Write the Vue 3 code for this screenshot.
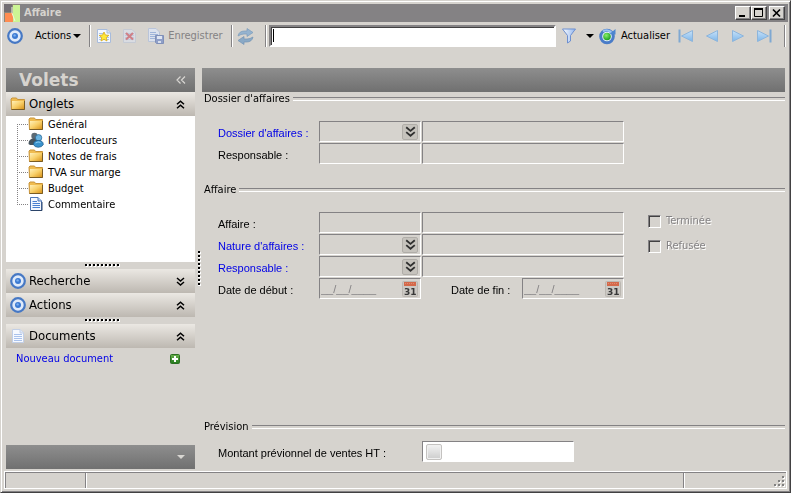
<script setup>
import { ref } from 'vue'

const query = ref('')
const amount = ref('')
const startDate = ref('__/__/____')
const endDate = ref('__/__/____')

const tabs = [
  { label: 'Général', icon: 'folder' },
  { label: 'Interlocuteurs', icon: 'people' },
  { label: 'Notes de frais', icon: 'folder' },
  { label: 'TVA sur marge', icon: 'folder' },
  { label: 'Budget', icon: 'folder' },
  { label: 'Commentaire', icon: 'note' }
]

const caseRows = [
  { id: 'aff', label: 'Affaire :', link: false },
  { id: 'nature', label: "Nature d'affaires :", link: true },
  { id: 'resp', label: 'Responsable :', link: true }
]
</script>

<template>
  <div class="window">
    <svg class="defs" width="0" height="0" aria-hidden="true">
      <defs>
        <linearGradient id="gFolder" x1="0" y1="0" x2="1" y2="1">
          <stop offset="0" stop-color="#fff0b8" />
          <stop offset="0.5" stop-color="#f8cf68" />
          <stop offset="1" stop-color="#d9941c" />
        </linearGradient>
        <linearGradient id="gBlue" x1="0" y1="0" x2="0" y2="1">
          <stop offset="0" stop-color="#c9e2f8" />
          <stop offset="1" stop-color="#7db6ea" />
        </linearGradient>
        <linearGradient id="gFunnel" x1="0" y1="0" x2="1" y2="0">
          <stop offset="0" stop-color="#ffffff" />
          <stop offset="1" stop-color="#8fb4ee" />
        </linearGradient>
        <linearGradient id="gGreen" x1="0" y1="0" x2="0" y2="1">
          <stop offset="0" stop-color="#6ab04c" />
          <stop offset="1" stop-color="#237a1c" />
        </linearGradient>
        <radialGradient id="gBall" cx="0.4" cy="0.35" r="0.7">
          <stop offset="0" stop-color="#8cf06a" />
          <stop offset="1" stop-color="#149a1c" />
        </radialGradient>
      </defs>
      <symbol id="target" viewBox="0 0 16 16">
        <circle cx="8" cy="8" r="6.800" fill="#dfeafa" stroke="#4678c4" stroke-width="2.200" />
        <circle cx="8" cy="8" r="3" fill="#3b79d2" />
        <circle cx="7.600" cy="7.400" r="1.200" fill="#7cb0f0" />
      </symbol>
      <symbol id="folder" viewBox="0 0 16 16">
        <path d="M1 3 L2 2 H6.500 L7.500 3.500 H14.500 V13.500 H1.500 Z" fill="#f0bc50" stroke="#c8943a" />
        <path d="M2 5 H14 V13 H2 Z" fill="url(#gFolder)" />
        <path d="M1.500 13.500 H14.500 V5" fill="none" stroke="#7a5c24" />
      </symbol>
      <symbol id="people" viewBox="0 0 16 16">
        <circle cx="6.500" cy="4" r="3.200" fill="#5c6a74" />
        <path d="M0.500 12 Q0.500 6.500 6 6.500 Q10 6.500 10 13 H2 Z" fill="#46545e" />
        <circle cx="10.600" cy="5.800" r="3.200" fill="#6ab4e2" stroke="#23618f" stroke-width="0.700" />
        <path d="M5.500 12.500 Q5.500 8.500 10.200 8.500 Q15.300 8.500 15.300 12.500 Q14 15.300 10.200 15.300 Q6.500 15.300 5.500 12.500 Z" fill="#3a92cc" stroke="#1f5c88" stroke-width="0.700" />
        <path d="M7.500 11 Q10 9.200 12.500 10.400" fill="none" stroke="#8fd0f4" />
      </symbol>
      <symbol id="note" viewBox="0 0 16 16">
        <path d="M2.500 1.500 H10 L13.500 5 V14.500 H2.500 Z" fill="#f4f8ff" stroke="#4f76b4" />
        <path d="M10 1.500 V5 H13.500" fill="#bcd0f0" stroke="#4f76b4" />
        <path d="M4.500 5.500 H9 M4.500 7.500 H12 M4.500 9.500 H12 M4.500 11.500 H12" stroke="#4a80d0" />
        <path d="M3 14.500 H14 V6" fill="none" stroke="#2c4468" />
      </symbol>
      <symbol id="sheet" viewBox="0 0 16 16">
        <path d="M2.500 1.500 H10 L13.500 5 V14.500 H2.500 Z" fill="#f6f9ff" stroke="#c2cfe6" />
        <path d="M10 1.500 V5 H13.500" fill="#dde7f8" stroke="#c2cfe6" />
        <path d="M4 6.500 H12 M4 8.500 H12 M4 10.500 H12 M4 12.500 H12" stroke="#a9c2ec" />
      </symbol>
      <symbol id="down2" viewBox="0 0 9 9">
        <path d="M1 1 L4.500 4 L8 1 M1 5 L4.500 8 L8 5" fill="none" stroke="currentColor" stroke-width="1.500" />
      </symbol>
      <symbol id="up2" viewBox="0 0 9 9">
        <path d="M1 4.300 L4.500 1.200 L8 4.300 M1 8.300 L4.500 5.200 L8 8.300" fill="none" stroke="currentColor" stroke-width="1.500" />
      </symbol>
      <symbol id="calendar" viewBox="0 0 16 16">
        <rect x="0.500" y="0.500" width="15" height="15" rx="1" fill="#cbc8c3" stroke="#bbb7b1" />
        <rect x="2" y="1" width="12" height="4" fill="#d4694a" />
        <path d="M3 2.500 H13" stroke="#e08a70" stroke-dasharray="1 1" />
      </symbol>
    </svg>

    <header class="titlebar">
      <svg class="logo" width="16" height="18" viewBox="0 0 16 18">
        <rect width="16" height="18" fill="#8c8678" />
        <rect x="0" y="0" width="8" height="8" fill="#726e72" />
        <rect x="1" y="9" width="8" height="9" fill="#ff8c50" />
        <rect x="9" y="1" width="7" height="17" fill="#ccf594" />
        <path d="M8 3 V9 L11 17" fill="none" stroke="#eef8dc" />
      </svg>
      <h1>Affaire</h1>
      <div class="caption-buttons">
        <button type="button" aria-label="Réduire">
          <svg width="12" height="10" viewBox="0 0 12 10"><path d="M2 8 H8" stroke="#000" stroke-width="2" /></svg>
        </button>
        <button type="button" aria-label="Agrandir">
          <svg width="12" height="10" viewBox="0 0 12 10"><path d="M1.500 1 V8.500 H9.500 V1" fill="none" stroke="#000" /><path d="M1 1 H10" stroke="#000" stroke-width="2" /></svg>
        </button>
        <button type="button" class="close" aria-label="Fermer">
          <svg width="12" height="10" viewBox="0 0 12 10"><path d="M2 1.500 L9 8.500 M9 1.500 L2 8.500" stroke="#000" stroke-width="1.700" /></svg>
        </button>
      </div>
    </header>

    <nav class="toolbar">
      <button type="button" class="tool" aria-label="Cible">
        <svg width="16" height="16"><use href="#target" /></svg>
      </button>
      <button type="button" class="tool menu">Actions <i class="caret"></i></button>
      <span class="sep"></span>
      <button type="button" class="tool file" aria-label="Nouveau">
        <svg width="16" height="16" viewBox="0 0 16 16">
          <path d="M1.500 1.500 H11 L14.500 5 V14.500 H1.500 Z" fill="#f3f7ff" stroke="#a8bcdc" />
          <path d="M11 1.500 V5 H14.500" fill="#d7e3f6" stroke="#a8bcdc" />
          <path d="M3 5.500 H8 M3 7.500 H13 M3 9.500 H13 M3 11.500 H13" stroke="#a8c2ec" />
          <path d="M8 4 L9.400 7 L12.800 7.400 L10.300 9.600 L11 13 L8 11.300 L5 13 L5.700 9.600 L3.200 7.400 L6.600 7 Z" fill="#ffe83a" stroke="#d9ac1c" stroke-width="0.800" />
        </svg>
      </button>
      <button type="button" class="tool file" disabled aria-label="Supprimer">
        <svg width="16" height="16" viewBox="0 0 16 16">
          <path d="M1.500 1.500 H10 L13.500 5 V14.500 H1.500 Z" fill="#d9dce2" stroke="#c5cad4" />
          <path d="M3 5.500 H12 M3 7.500 H12 M3 9.500 H12 M3 11.500 H12" stroke="#c0cbe0" />
          <path d="M4 5 L11 11.500 M11 5 L4 11.500" stroke="#cf8087" stroke-width="2.200" />
        </svg>
      </button>
      <button type="button" class="tool save" disabled>
        <svg width="16" height="16" viewBox="0 0 16 16">
          <path d="M0.500 0.500 H8 L11.500 4 V13.500 H0.500 Z" fill="#dce2ee" stroke="#b9c4d9" />
          <path d="M2 4.500 H8 M2 6.500 H10 M2 8.500 H10 M2 10.500 H7" stroke="#9fb4da" />
          <path d="M7.500 7.500 H15.500 V15.500 H8.500 L7.500 14.500 Z" fill="#8f9fc8" stroke="#8090b8" />
          <path d="M9 8 H14 V11 H9 Z" fill="#dfe5f2" />
          <path d="M10 13 H13 V15 H10 Z" fill="#d8dfee" />
        </svg>
        Enregistrer
      </button>
      <span class="sep"></span>
      <button type="button" class="tool sync" disabled aria-label="Synchroniser">
        <svg width="17" height="17" viewBox="0 0 17 17">
          <path d="M1 8 Q2 3 7.500 3 H10 V0.500 L16 4.500 L10 8.500 V6 H7 Q4 6 1 8 Z" fill="#95b3cf" stroke="#7b9cbc" stroke-width="0.700" />
          <path d="M16 9 Q15 14 9.500 14 H7 V16.500 L1 12.500 L7 8.500 V11 H10 Q13 11 16 9 Z" fill="#8aa9c6" stroke="#7394b5" stroke-width="0.700" />
        </svg>
      </button>
      <span class="sep"></span>
      <input v-model="query" class="search" type="text" aria-label="Rechercher" autofocus />
      <button type="button" class="tool filter" aria-label="Filtrer">
        <svg width="16" height="16" viewBox="0 0 16 16">
          <path d="M1.500 1 H14.500 L9.500 7.500 V13 L6.500 15 V7.500 Z" fill="url(#gFunnel)" stroke="#6d8fd0" />
        </svg>
      </button>
      <button type="button" class="tool drop" aria-label="Filtres"><i class="caret"></i></button>
      <button type="button" class="tool reload">
        <svg width="17" height="17" viewBox="0 0 17 17">
          <circle cx="8" cy="8.500" r="6.300" fill="#e8f1fc" stroke="#4a7cc8" stroke-width="3" />
          <path d="M4 3.500 A6.500 6.500 0 0 1 13 5" fill="none" stroke="#9cc4f2" stroke-width="2" />
          <path d="M10.500 6 L16.500 1 V6.500 Z" fill="#4d86d0" />
          <circle cx="8" cy="8.500" r="3.800" fill="url(#gBall)" />
        </svg>
        Actualiser
      </button>
      <button type="button" class="tool step" disabled aria-label="Premier">
        <svg width="16" height="14" viewBox="0 0 16 14"><path d="M1.500 0.500 V13.500" stroke="#7fa8d2" stroke-width="2" /><path d="M14.500 1.500 V12.500 L3.500 7 Z" fill="url(#gBlue)" stroke="#8db5dc" /></svg>
      </button>
      <button type="button" class="tool step" disabled aria-label="Précédent">
        <svg width="16" height="14" viewBox="0 0 16 14"><path d="M13.500 1.500 V12.500 L2.500 7 Z" fill="url(#gBlue)" stroke="#8db5dc" /></svg>
      </button>
      <button type="button" class="tool step" disabled aria-label="Suivant">
        <svg width="16" height="14" viewBox="0 0 16 14"><path d="M2.500 1.500 V12.500 L13.500 7 Z" fill="url(#gBlue)" stroke="#8db5dc" /></svg>
      </button>
      <button type="button" class="tool step" disabled aria-label="Dernier">
        <svg width="16" height="14" viewBox="0 0 16 14"><path d="M14.500 0.500 V13.500" stroke="#7fa8d2" stroke-width="2" /><path d="M1.500 1.500 V12.500 L12.500 7 Z" fill="url(#gBlue)" stroke="#8db5dc" /></svg>
      </button>
      <span class="sep last"></span>
    </nav>

    <div class="body">
      <aside class="sidebar">
        <div class="band head">
          <h2>Volets</h2>
          <button type="button" class="plain" aria-label="Replier">
            <svg width="10" height="8" viewBox="0 0 10 8"><path d="M4.500 0.500 L1 4 L4.500 7.500 M9 0.500 L5.500 4 L9 7.500" fill="none" stroke="#d8d6d2" stroke-width="1.200" /></svg>
          </button>
        </div>
        <button type="button" class="panel-title">
          <svg width="16" height="16"><use href="#folder" /></svg>
          <span>Onglets</span>
          <svg width="9" height="9"><use href="#up2" /></svg>
        </button>
        <ul class="tree">
          <li v-for="tab in tabs" :key="tab.label">
            <span class="branch"></span>
            <svg width="16" height="16"><use :href="'#' + tab.icon" /></svg>
            <span>{{ tab.label }}</span>
          </li>
        </ul>
        <div class="grip"><i></i></div>
        <button type="button" class="panel-title">
          <svg width="16" height="16"><use href="#target" /></svg>
          <span>Recherche</span>
          <svg width="9" height="9"><use href="#down2" /></svg>
        </button>
        <button type="button" class="panel-title">
          <svg width="16" height="16"><use href="#target" /></svg>
          <span>Actions</span>
          <svg width="9" height="9"><use href="#up2" /></svg>
        </button>
        <div class="grip"><i></i></div>
        <button type="button" class="panel-title">
          <svg width="16" height="16"><use href="#sheet" /></svg>
          <span>Documents</span>
          <svg width="9" height="9"><use href="#up2" /></svg>
        </button>
        <div class="doc-row">
          <a href="#">Nouveau document</a>
          <button type="button" class="plain" aria-label="Ajouter">
            <svg width="10" height="10" viewBox="0 0 10 10"><rect x="0.500" y="0.500" width="9" height="9" rx="1" fill="url(#gGreen)" stroke="#2c6e22" /><path d="M5 2 V8 M2 5 H8" stroke="#fff" stroke-width="2" /></svg>
          </button>
        </div>
        <div class="band foot">
          <button type="button" class="plain" aria-label="Plus de volets">
            <svg width="8" height="4" viewBox="0 0 8 4"><path d="M0 0 H8 L4 4 Z" fill="#d8d6d2" /></svg>
          </button>
        </div>
      </aside>

      <div class="splitter"><i></i></div>

      <main class="content">
        <div class="band"></div>

        <section class="group">
          <h3>Dossier d'affaires</h3>
          <div class="form">
            <label class="link" for="dossier">Dossier d'affaires :</label>
            <div class="field">
              <input id="dossier" type="text" disabled />
              <button type="button" class="pick" aria-label="Choisir un dossier"><svg width="11" height="11"><use href="#down2" /></svg></button>
            </div>
            <input class="field" type="text" disabled aria-label="Libellé du dossier" />
            <label for="dossier-resp">Responsable :</label>
            <input id="dossier-resp" class="field" type="text" disabled />
            <input class="field" type="text" disabled aria-label="Nom du responsable" />
          </div>
        </section>

        <section class="group second">
          <h3>Affaire</h3>
          <div class="columns">
            <div class="form">
              <template v-for="row in caseRows" :key="row.id">
                <label :for="row.id" :class="{ link: row.link }">{{ row.label }}</label>
                <div class="field">
                  <input :id="row.id" type="text" disabled />
                  <button v-if="row.link" type="button" class="pick" aria-label="Choisir"><svg width="11" height="11"><use href="#down2" /></svg></button>
                </div>
                <input class="field" type="text" disabled aria-label="Libellé" />
              </template>
              <label for="start">Date de début :</label>
              <div class="field">
                <input id="start" v-model="startDate" type="text" disabled />
                <button type="button" class="date" aria-label="Calendrier de début"><svg width="16" height="16"><use href="#calendar" /><text x="2" y="14">31</text></svg></button>
              </div>
              <div class="end-date">
                <label for="end">Date de fin :</label>
                <div class="field">
                  <input id="end" v-model="endDate" type="text" disabled />
                  <button type="button" class="date" aria-label="Calendrier de fin"><svg width="16" height="16"><use href="#calendar" /><text x="2" y="14">31</text></svg></button>
                </div>
              </div>
            </div>
            <div class="checks">
              <label><input type="checkbox" disabled /> Terminée</label>
              <label><input type="checkbox" disabled /> Refusée</label>
            </div>
          </div>
        </section>

        <section class="group forecast">
          <h3>Prévision</h3>
          <div class="form">
            <label class="wide" for="amount">Montant prévionnel de ventes HT :</label>
            <div class="field amount">
              <button type="button" class="calc" aria-label="Calculer"></button>
              <input id="amount" v-model="amount" type="text" />
            </div>
          </div>
        </section>
      </main>
    </div>

    <footer class="status">
      <span></span>
      <span></span>
      <span class="corner">
        <svg width="12" height="12" viewBox="0 0 12 12">
          <path d="M9 1 h2 v2 h-2 z M5 5 h2 v2 h-2 z M9 5 h2 v2 h-2 z M1 9 h2 v2 h-2 z M5 9 h2 v2 h-2 z M9 9 h2 v2 h-2 z" fill="#fff" />
          <path d="M8 0 h2 v2 h-2 z M4 4 h2 v2 h-2 z M8 4 h2 v2 h-2 z M0 8 h2 v2 h-2 z M4 8 h2 v2 h-2 z M8 8 h2 v2 h-2 z" fill="#808080" />
        </svg>
      </span>
    </footer>
  </div>
</template>

<style>
body {
  margin: 0;
  background: #d6d3ce;
}
</style>

<style scoped>
* {
  box-sizing: border-box;
}

.window {
  display: flex;
  flex-direction: column;
  min-height: 100vh;
  padding: 2px;
  background: #d6d3ce;
  border: 1px solid #d6d3ce;
  border-right-color: #424142;
  border-bottom-color: #424142;
  box-shadow: inset 1px 1px #fff, inset -1px -1px #848284;
  color: #000;
  font: 11px/14px "DejaVu Sans Condensed", "Liberation Sans", sans-serif;
}

.defs {
  position: absolute;
}

svg {
  display: block;
  flex: none;
}

button {
  font: inherit;
  color: inherit;
  padding: 0;
  margin: 0;
  border: 0;
  background: none;
}

input {
  font: inherit;
  margin: 0;
  border-radius: 0;
  outline: 0;
}

h1,
h2,
h3 {
  margin: 0;
}

/* Title bar */
.titlebar {
  display: flex;
  align-items: center;
  gap: 4px;
  height: 18px;
  margin: 1px 0 0 1px;
  padding-right: 3px;
  background: #848284;
  color: #d6d3ce;
}

.titlebar h1 {
  flex: 1;
  font-size: 11px;
  font-weight: bold;
}

.caption-buttons {
  display: flex;
}

.caption-buttons button {
  width: 16px;
  height: 14px;
  padding: 1px;
  background: #d6d3ce;
  border: 1px solid;
  border-color: #fff #424142 #424142 #fff;
  box-shadow: inset -1px -1px #848284;
}

.caption-buttons .close {
  margin-left: 2px;
}

/* Toolbar */
.toolbar {
  display: flex;
  align-items: center;
  height: 28px;
  padding: 0 2px 0 4px;
}

.tool {
  display: flex;
  align-items: center;
  gap: 4px;
  height: 22px;
}

.tool:disabled {
  color: #848284;
}

.menu {
  gap: 2px;
  padding: 0 8px 0 12px;
}

.caret {
  border: 4px solid transparent;
  border-top-color: currentColor;
  border-bottom: 0;
}

.sep {
  width: 2px;
  height: 22px;
  border-left: 1px solid #848284;
  border-right: 1px solid #fff;
}

.sep.last {
  margin-left: 12px;
}

.file {
  padding: 0 5px;
}

.save {
  padding: 0 8px 0 5px;
}

.sync {
  padding: 0 11px 0 4px;
}

.search {
  flex: 1;
  min-width: 0;
  height: 22px;
  margin-left: 2px;
  padding: 0 2px;
  background: #fff linear-gradient(#000, #000) 2px 2px / 1px 13px no-repeat;
  border: 2px solid;
  border-color: #848284 #fff #fff #848284;
  box-shadow: inset 1px 1px #424142;
  caret-color: transparent;
}

.filter {
  padding: 0 9px 0 5px;
}

.drop {
  padding-right: 5px;
}

.reload {
  padding-right: 8px;
  gap: 5px;
}

.step + .step {
  margin-left: 10px;
}

/* Body */
.body {
  display: flex;
  flex: 1;
  padding: 18px 3px 2px;
}

.band {
  display: flex;
  align-items: center;
  height: 24px;
  background: linear-gradient(#8e8e8e, #707070);
  flex: none;
}

.sidebar {
  display: flex;
  flex-direction: column;
  width: 189px;
}

.head {
  justify-content: space-between;
  padding: 0 9px 0 13px;
}

.head h2 {
  color: #d6d3ce;
  font: bold 17px/24px "DejaVu Sans", sans-serif;
}

.panel-title {
  display: flex;
  align-items: center;
  gap: 3px;
  height: 24px;
  padding: 0 10px 0 4px;
  background: linear-gradient(#ebe8e3, #bdb8b1);
  font-size: 13px;
  line-height: 18px;
  text-align: left;
}

.panel-title span {
  flex: 1;
}

.tree {
  flex: none;
  height: 146px;
  margin: 0;
  padding: 0 0 0 11px;
  background: #fff;
  list-style: none;
}

.tree li {
  display: flex;
  align-items: center;
  height: 16px;
}

.tree li span:last-child {
  padding-top: 2px;
  margin-left: 4px;
}

.branch {
  width: 11px;
  height: 16px;
  background:
    repeating-linear-gradient(90deg, #848284 0 1px, transparent 1px 2px) 0 8px / 11px 1px no-repeat,
    repeating-linear-gradient(#848284 0 1px, transparent 1px 2px) 0 0 / 1px 16px no-repeat;
}

.tree li:first-child .branch {
  background-position: 0 8px, 0 8px;
}

.tree li:last-child .branch {
  background-size: 11px 1px, 1px 8px;
}

.grip {
  display: flex;
  align-items: center;
  justify-content: center;
  height: 7px;
  padding-left: 3px;
}

.grip i {
  width: 35px;
  height: 3px;
  background:
    repeating-linear-gradient(90deg, #000 0 2px, transparent 2px 4px) 0 0 / 35px 2px no-repeat,
    repeating-linear-gradient(90deg, transparent 0 1px, #fff 1px 3px, transparent 3px 4px);
}

.splitter {
  display: flex;
  justify-content: flex-end;
  width: 7px;
  padding: 183px 1px 0 0;
}

.splitter i {
  width: 3px;
  height: 35px;
  background:
    repeating-linear-gradient(#000 0 2px, transparent 2px 4px) 0 0 / 2px 35px no-repeat,
    repeating-linear-gradient(transparent 0 1px, #fff 1px 3px, transparent 3px 4px);
}

.doc-row {
  display: flex;
  align-items: center;
  justify-content: space-between;
  height: 22px;
  padding: 0 15px 0 10px;
}

a,
.link {
  color: #0000e6;
  text-decoration: none;
}

.foot {
  justify-content: flex-end;
  margin-top: auto;
  padding-right: 10px;
}

/* Form area */
.content {
  display: flex;
  flex: 1;
  flex-direction: column;
  min-width: 0;
}

.group h3 {
  display: flex;
  align-items: center;
  gap: 3px;
  padding-left: 2px;
  font-size: 11px;
  font-weight: normal;
  line-height: 14px;
}

.group h3::after {
  content: "";
  flex: 1;
  height: 2px;
  border-top: 1px solid #848284;
  border-bottom: 1px solid #fff;
}

.form {
  display: grid;
  grid-template-columns: 101px 102px 203px;
  gap: 1px;
  column-gap: 0;
  align-items: center;
  padding: 15px 0 0 16px;
  font-family: "Liberation Sans", Arial, sans-serif;
}

.form label {
  padding-top: 2px;
}

.form > :nth-child(3n) {
  margin-left: 1px;
}

.second {
  margin-top: 19px;
}

.columns {
  display: flex;
}

.forecast {
  margin-top: auto;
  padding-bottom: 7px;
}

.forecast .form {
  padding-top: 7px;
}

.wide {
  grid-column: 1 / 3;
}

.field {
  display: flex;
  align-items: center;
  min-width: 0;
  height: 21px;
  padding: 0 2px 0 1px;
  background: transparent;
  border: 1px solid;
  border-color: #848284 #fff #fff #848284;
}

.field input {
  flex: 1;
  width: 0;
  min-width: 0;
  padding: 0;
  border: 0;
  background: transparent;
}

.field input:disabled {
  color: #848284;
}

.pick {
  display: flex;
  align-items: center;
  justify-content: center;
  width: 16px;
  height: 16px;
  background: #c6c3bd;
  border: 1px solid #b0ada8;
  border-radius: 2px;
  color: #303030;
}

.date text {
  font: bold 9px "DejaVu Sans", sans-serif;
  fill: #383838;
}

.end-date {
  display: flex;
  align-items: center;
  justify-content: space-between;
  padding-left: 29px;
}

.end-date .field {
  width: 102px;
}

.checks {
  display: flex;
  flex-direction: column;
  gap: 11px;
  padding: 17px 0 0 24px;
}

.checks label {
  display: flex;
  align-items: center;
  gap: 5px;
  color: #848284;
  text-shadow: 1px 1px #fff;
}

.checks input {
  appearance: none;
  width: 13px;
  height: 13px;
  border: 1px solid;
  border-color: #848284 #fff #fff #848284;
  box-shadow: inset 1px 1px #424142;
}

.field.amount {
  width: 152px;
  margin-left: 1px;
  gap: 2px;
  padding-left: 3px;
  background: #fff;
}

.calc {
  width: 16px;
  height: 16px;
  background: linear-gradient(#f2f2f2, #cdcdcd);
  border: 1px solid #c4c2c0;
  border-radius: 2px;
  box-shadow: inset 0 0 0 1px #f0f0f0;
}

/* Status bar */
.status {
  display: grid;
  grid-template-columns: 80px 1fr 103px;
  height: 18px;
  margin: 0 1px 1px;
  border: 1px solid #fff;
}

.status span {
  border-top: 1px solid #848284;
  border-left: 1px solid #848284;
}

.status span + span {
  border-left-color: #848284;
  box-shadow: inset 1px 0 #fff;
}

.corner {
  display: flex;
  align-items: flex-end;
  justify-content: flex-end;
}
</style>
